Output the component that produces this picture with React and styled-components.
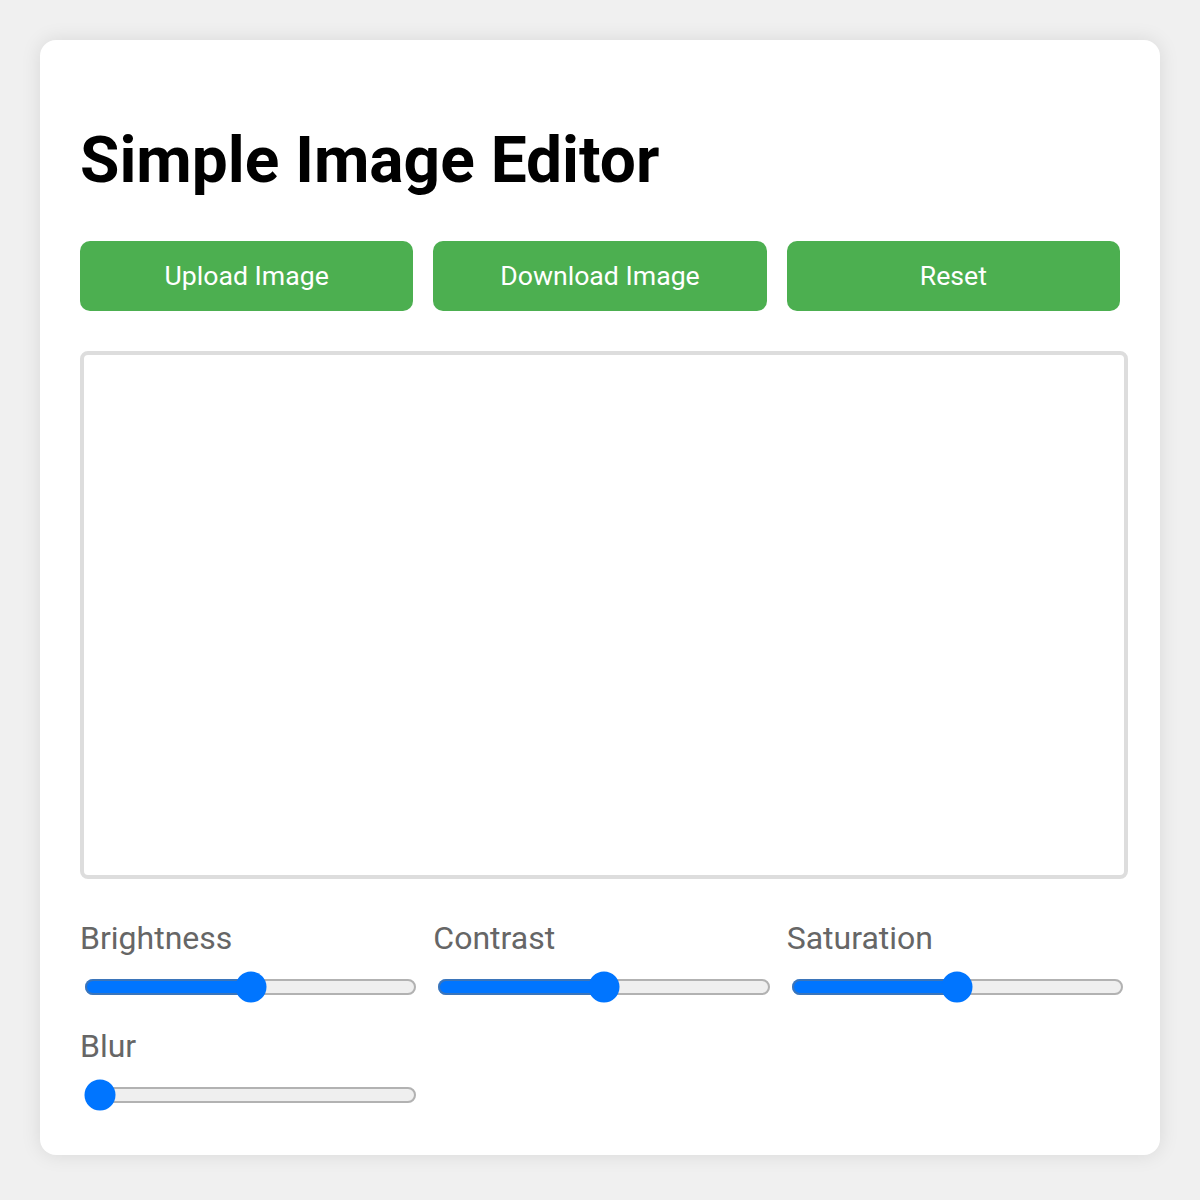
import React, { useState } from 'react'
import styled, { createGlobalStyle } from 'styled-components'

// the page is laid out at half size and zoomed, so native controls scale with it
const GlobalStyle = createGlobalStyle`
  html {
    zoom: 2;
  }
  body {
    margin: 0;
    padding: 20px;
    background-color: #f0f0f0;
    font-family: Roboto, "Liberation Sans", Arial, sans-serif;
  }
`;

const Card = styled.div`
  background-color: #fff;
  border-radius: 8px;
  padding: 20px;
  box-shadow: 0 0 10px rgba(0, 0, 0, 0.1);
`;

const Title = styled.h1`
  font-size: 32px;
  font-weight: 700;
  margin: 0.67em 0;
  color: #000;
`;

const Toolbar = styled.div`
  display: flex;
  gap: 10px;
  margin-bottom: 20px;
`;

const Button = styled.button`
  flex: 1;
  height: 35px;
  padding: 0 10px;
  border: none;
  border-radius: 5px;
  background-color: #4caf50;
  color: #fff;
  font-family: inherit;
  font-size: 13.33px;
  cursor: pointer;
`;

const Canvas = styled.canvas`
  display: block;
  border: 2px solid #ddd;
  border-radius: 4px;
  margin-bottom: 20px;
`;

const Controls = styled.div`
  display: grid;
  grid-template-columns: repeat(3, 1fr);
  gap: 10px;
`;

const Control = styled.div`
  display: flex;
  flex-direction: column;
`;

const Label = styled.label`
  display: block;
  margin-bottom: 5px;
  font-size: 16px;
  color: #666;
`;

const Slider = styled.input`
  width: 100%;
  margin: 2px;
`;

const sliders = [
  { key: 'brightness', label: 'Brightness', min: 0, max: 200, start: 100 },
  { key: 'contrast', label: 'Contrast', min: 0, max: 200, start: 100 },
  { key: 'saturation', label: 'Saturation', min: 0, max: 200, start: 100 },
  { key: 'blur', label: 'Blur', min: 0, max: 10, start: 0 },
]

const initial = Object.fromEntries(sliders.map(s => [s.key, s.start]))

const App = () => {
  const [values, setValues] = useState(initial)

  const handleChange = (key) => (ev) => {
    setValues({ ...values, [key]: Number(ev.target.value) })
  }

  return (
    <>
      <GlobalStyle />
      <Card>
        <Title>Simple Image Editor</Title>
        <Toolbar>
          <Button>Upload Image</Button>
          <Button>Download Image</Button>
          <Button onClick={() => setValues(initial)}>Reset</Button>
        </Toolbar>
        <Canvas width={520} height={260} />
        <Controls>
          {sliders.map(s => (
            <Control key={s.key}>
              <Label htmlFor={s.key}>{s.label}</Label>
              <Slider
                id={s.key}
                type="range"
                min={s.min}
                max={s.max}
                value={values[s.key]}
                onChange={handleChange(s.key)}
              />
            </Control>
          ))}
        </Controls>
      </Card>
    </>
  )
}

export default App
